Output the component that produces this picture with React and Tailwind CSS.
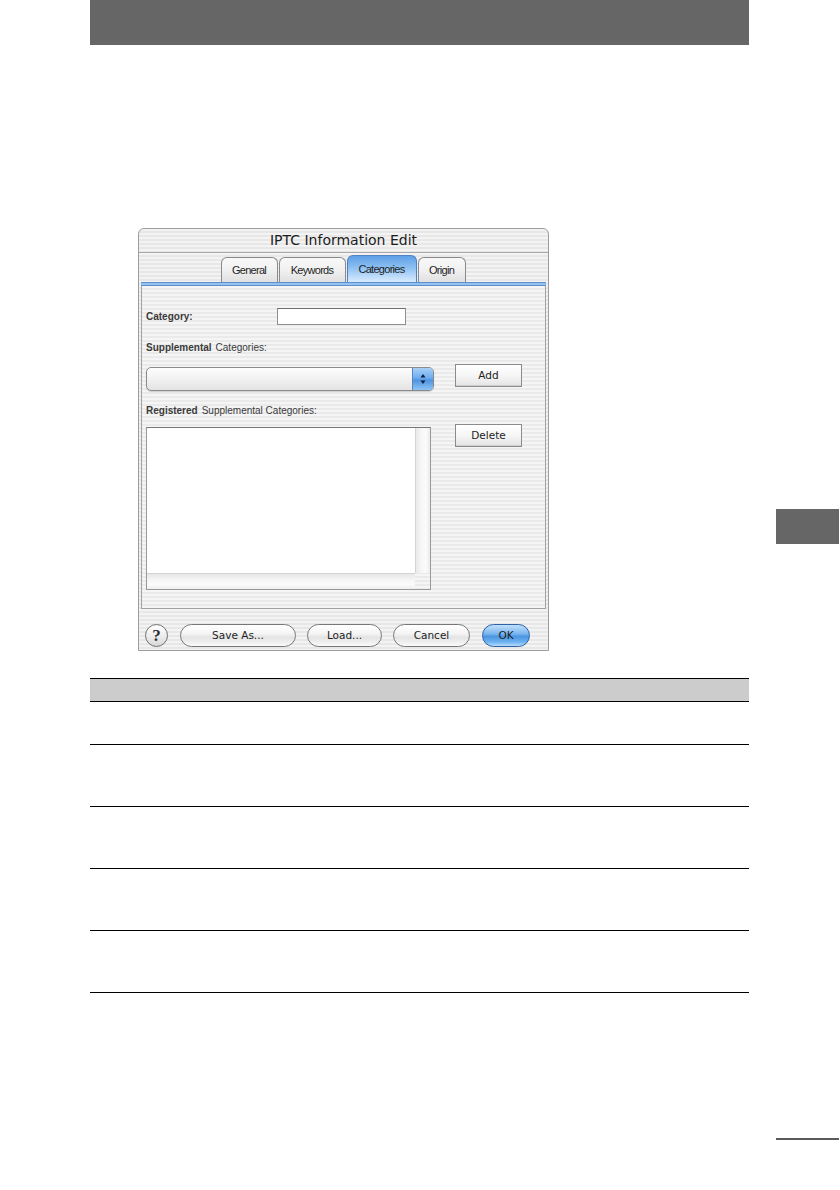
import React from "react";

const stripes =
  "bg-[repeating-linear-gradient(180deg,#f3f3f3_0px,#f3f3f3_2px,#e7e7e7_2px,#e7e7e7_4px)]";

function Tab({ label, w, selected }) {
  return (
    <div
      className={
        "flex items-center justify-center rounded-t-[6px] border border-b-0 pt-[1px] text-[11px] tracking-[-0.7px] text-[#1e1e1e] " +
        (selected
          ? "h-[27px] border-[#4f82c0] bg-[linear-gradient(180deg,#5f9fe6_0%,#8cc0f2_45%,#bfdcfa_80%,#d6ebfd_100%)]"
          : "h-[25px] border-[#8a8a8a] bg-[linear-gradient(180deg,#f8f8f8_0%,#f1f1f1_50%,#e0e0e0_100%)]")
      }
      style={{ width: w, fontFamily: '"Liberation Sans", Arial, sans-serif' }}
    >
      {label}
    </div>
  );
}

function SquareButton({ label, className }) {
  return (
    <div
      className={
        "flex h-[23px] w-[67px] items-center justify-center border border-[#8b8b8b] bg-[linear-gradient(180deg,#ffffff_0%,#f6f6f6_50%,#e4e4e4_100%)] text-[10.5px] text-[#222] shadow-[inset_0_-1px_0_#d0d0d0] " +
        (className || "")
      }
      style={{ fontFamily: '"DejaVu Sans", sans-serif' }}
    >
      {label}
    </div>
  );
}

function PillButton({ label, w, ml, primary }) {
  return (
    <div
      className={
        "flex h-[23px] items-center justify-center rounded-full border text-[10.5px] text-[#1e1e1e] " +
        (primary
          ? "border-[#2e62a6] bg-[linear-gradient(180deg,#c2e0fc_0%,#7db8f0_40%,#4b95e2_55%,#6cb1f0_80%,#b7dcfc_100%)]"
          : "border-[#777] bg-[linear-gradient(180deg,#ffffff_0%,#f5f5f5_40%,#e4e4e4_58%,#eeeeee_80%,#fbfbfb_100%)]")
      }
      style={{ width: w, marginLeft: ml, fontFamily: '"DejaVu Sans", sans-serif' }}
    >
      {label}
    </div>
  );
}

function Dialog() {
  const lab = { fontFamily: '"Liberation Sans", Arial, sans-serif' };
  return (
    <div className={"ml-[48px] mt-[183px] flex h-[423px] w-[411px] flex-col rounded-t-[6px] border border-[#9d9d9d] " + stripes}>
      {/* title */}
      <div
        className="flex h-[24px] items-center justify-center border-b border-[#a9a9a9] pb-[1px] text-[14px] text-[#1c1c1c]"
        style={{ fontFamily: '"DejaVu Sans", sans-serif' }}
      >
        IPTC Information Edit
      </div>
      {/* tabs */}
      <div className="mt-[1px] flex h-[28px] items-end justify-center gap-[1px] pr-[1px]">
        <Tab label="General" w={57} />
        <Tab label="Keywords" w={67} />
        <Tab label="Categories" w={70} selected />
        <Tab label="Origin" w={48} />
      </div>
      {/* panel */}
      <div className="mx-[2px] flex flex-col">
        <div className="h-[4px] border-y border-[#5c8fcb] bg-[#93c2f1]" />
        <div
          className="h-[323px] border-x border-b border-[#a2a2a2] bg-[repeating-linear-gradient(180deg,#f5f5f5_0px,#f5f5f5_2px,#eaeaea_2px,#eaeaea_4px)] text-[#3a3a3a]"
          style={lab}
        >
          {/* category row */}
          <div className="mt-[22px] flex h-[17px] items-center">
            <div className="w-[135px] pl-[4px] text-[10px] font-bold text-[#3a3a3a]">Category:</div>
            <div className="h-[17px] w-[129px] border border-[#8f8f8f] border-t-[#6f6f6f] bg-white" />
          </div>
          {/* supplemental label */}
          <div className="mt-[15px] flex h-[14px] items-center pl-[4px] text-[10px]">
            <span className="font-bold">Supplemental</span>
            <span className="ml-[4px]">Categories:</span>
          </div>
          {/* popup row */}
          <div className="mt-[10px] flex items-start">
            <div className="ml-[4px] mt-[3px] flex h-[24px] w-[288px] overflow-hidden rounded-[5px] border border-[#8a8a8a] bg-[linear-gradient(180deg,#fdfdfd_0%,#f1f1f1_50%,#e3e3e3_100%)] shadow-[0_1px_1px_rgba(0,0,0,0.15)]">
              <div className="flex-1" />
              <div className="flex w-[21px] flex-col items-center justify-center border-l border-[#5784bd] bg-[linear-gradient(180deg,#a8d0f7_0%,#6fadee_45%,#4d94e0_55%,#8dc3f6_100%)] leading-none">
                <svg width="6" height="12" viewBox="0 0 6 12">
                  <path d="M3 1 L5.5 4.5 L0.5 4.5 Z" fill="#102040" />
                  <path d="M3 11 L5.5 7.5 L0.5 7.5 Z" fill="#102040" />
                </svg>
              </div>
            </div>
            <SquareButton label="Add" className="ml-[21px]" />
          </div>
          {/* registered label */}
          <div className="mt-[12px] flex h-[14px] items-center pl-[4px] text-[10px]">
            <span className="font-bold">Registered</span>
            <span className="ml-[4px]">Supplemental Categories:</span>
          </div>
          {/* list row */}
          <div className="mt-[7px] flex items-start">
            <div className="ml-[4px] mt-[3px] flex h-[163px] w-[285px] flex-col border border-[#999] border-t-[#777]">
              <div className="flex flex-1">
                <div className="flex-1 bg-white" />
                <div className="w-[15px] border-l border-[#d4d4d4] bg-[linear-gradient(90deg,#e9e9e9_0%,#f7f7f7_40%,#fbfbfb_70%,#ececec_100%)]" />
              </div>
              <div className="flex h-[16px]">
                <div className="flex-1 border-t border-[#d4d4d4] bg-[linear-gradient(180deg,#e6e6e6_0%,#f5f5f5_40%,#fbfbfb_70%,#eeeeee_100%)]" />
                <div className="w-[15px]" />
              </div>
            </div>
            <SquareButton label="Delete" className="ml-[24px]" />
          </div>
        </div>
      </div>
      {/* bottom buttons */}
      <div className="mt-[15px] flex items-center">
        <div
          className="ml-[6px] flex h-[23px] w-[23px] items-center justify-center rounded-full border border-[#6f6f6f] bg-[linear-gradient(180deg,#ffffff_0%,#eeeeee_50%,#d8d8d8_100%)] text-[17px] font-bold text-[#2a2a2a]"
          style={{ fontFamily: '"Liberation Serif", serif' }}
        >
          ?
        </div>
        <PillButton label="Save As..." w={116} ml={12} />
        <PillButton label="Load..." w={75} ml={11} />
        <PillButton label="Cancel" w={77} ml={11} />
        <PillButton label="OK" w={48} ml={12} primary />
      </div>
    </div>
  );
}

function Table() {
  return (
    <div className="mt-[27px] flex flex-col border-t border-black">
      <div className="h-[23px] border-b border-black bg-[#cccccc]" />
      <div className="h-[43px] border-b border-black" />
      <div className="h-[62px] border-b border-black" />
      <div className="h-[62px] border-b border-black" />
      <div className="h-[62px] border-b border-black" />
      <div className="h-[62px] border-b border-black" />
    </div>
  );
}

export default function App() {
  return (
    <div className="flex h-[1190px] w-[840px] overflow-hidden bg-white">
      <div className="ml-[90px] flex w-[659px] flex-col">
        <div className="h-[45px] bg-[#666666]" />
        <Dialog />
        <Table />
      </div>
      <div className="ml-[27px] flex w-[63px] flex-col">
        <div className="mt-[509px] h-[35px] bg-[#666666]" />
        <div className="mt-[594px] h-[2px] bg-[#5a5a5a]" />
      </div>
    </div>
  );
}
